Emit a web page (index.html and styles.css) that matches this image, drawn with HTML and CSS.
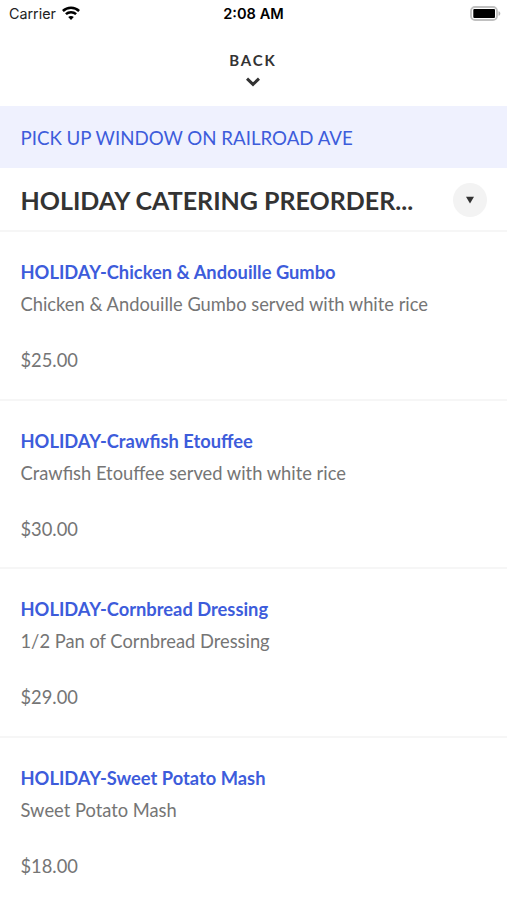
FILE: index.html
```html
<!DOCTYPE html>
<html lang="en">
<head>
  <meta charset="UTF-8">
  <meta name="viewport" content="width=device-width, initial-scale=1.0">
  <title>Menu</title>
  <link rel="stylesheet" href="styles.css">
</head>
<body>
  <div class="status">
    <div class="carrier">
      <span>Carrier</span>
      <svg class="wifi" viewBox="0 0 18 14" width="18" height="14">
        <path d="M.9 5C5.3.7 12.7.7 17.1 5M3.9 8.2c2.8-2.7 7.4-2.7 10.2 0" fill="none" stroke="#000" stroke-width="2.5"/>
        <path d="M9 14l-2.8-3c1.6-1.5 4-1.5 5.6 0z"/>
      </svg>
    </div>
    <div class="time">2:08 AM</div>
    <svg class="battery" viewBox="0 0 31 15" width="31" height="15">
      <rect x="1" y="1" width="26" height="13" rx="4" fill="none" stroke="#c0c0c0" stroke-width="1.8"/>
      <rect x="3.3" y="3" width="21.7" height="9" rx="1"/>
      <path d="M28.5 5.2c2.4.6 2.4 4 0 4.6z" fill="#b5b5b5"/>
    </svg>
  </div>

  <button class="back">
    <span>BACK</span>
    <svg viewBox="0 0 14 10" width="14" height="10">
      <path d="M1 1.6l6 5.8 6-5.8" fill="none" stroke="#333" stroke-width="3"/>
    </svg>
  </button>

  <div class="notice">PICK UP WINDOW ON RAILROAD AVE</div>

  <div class="category">
    <h1>HOLIDAY CATERING PREORDER...</h1>
    <button class="toggle">
      <svg viewBox="0 0 10 8" width="10" height="8"><path d="M1 .8h8L5 7.6z" fill="#333"/></svg>
    </button>
  </div>

  <div class="items">
    <div class="item">
      <h2>HOLIDAY-Chicken &amp; Andouille Gumbo</h2>
      <p>Chicken &amp; Andouille Gumbo served with white rice</p>
      <div class="price">$25.00</div>
    </div>
    <div class="item">
      <h2>HOLIDAY-Crawfish Etouffee</h2>
      <p>Crawfish Etouffee served with white rice</p>
      <div class="price">$30.00</div>
    </div>
    <div class="item">
      <h2>HOLIDAY-Cornbread Dressing</h2>
      <p>1/2 Pan of Cornbread Dressing</p>
      <div class="price">$29.00</div>
    </div>
    <div class="item">
      <h2>HOLIDAY-Sweet Potato Mash</h2>
      <p>Sweet Potato Mash</p>
      <div class="price">$18.00</div>
    </div>
  </div>
</body>
</html>
```

FILE: styles.css
```css
* {
  box-sizing: border-box;
}
body {
  margin: 0;
  height: 900px;
  overflow: hidden;
  background: #fff;
  color: #333;
  font-family: Lato, sans-serif;
}
button {
  border: 0;
  padding: 0;
  font-family: inherit;
  color: inherit;
}
.status {
  display: grid;
  grid-template-columns: 1fr auto 1fr;
  align-items: center;
  height: 27px;
  padding: 0 6px 0 9px;
  color: #000;
  font-family: Inter, sans-serif;
  font-size: 14.3px;
}
.carrier {
  display: flex;
  align-items: center;
  gap: 6px;
  color: #222;
}
.wifi {
  margin-bottom: 2px;
}
.time {
  margin-right: 3px;
  font-size: 14.6px;
  font-weight: 600;
}
.battery {
  justify-self: end;
  margin-bottom: 1px;
}
.back {
  display: flex;
  flex-direction: column;
  align-items: center;
  gap: 7px;
  width: 100%;
  height: 79px;
  padding: 24px 1px 0 0;
  background: #fff;
  font-size: 15px;
  font-weight: 700;
  line-height: 19px;
  letter-spacing: 1.9px;
}
.notice {
  height: 62px;
  padding: 0 20.5px;
  background: #eff1fe;
  color: #3d5cdb;
  font-size: 18.7px;
  line-height: 64px;
}
.category {
  display: flex;
  align-items: center;
  justify-content: space-between;
  height: 64px;
  padding: 2px 20px 0 20.5px;
  border-bottom: 2px solid #f6f6f6;
}
.category h1 {
  margin: 0;
  font-size: 25px;
  font-weight: 700;
}
.toggle {
  display: flex;
  align-items: center;
  justify-content: center;
  width: 34px;
  height: 34px;
  border-radius: 50%;
  background: #f3f3f3;
}
.item {
  height: 168.6px;
  padding: 24.3px 20.5px 0;
  border-bottom: 2px solid #f6f6f6;
  color: #757575;
  font-size: 18.32px;
  line-height: 32px;
}
.item h2 {
  margin: 0;
  color: #3d5cdb;
  font-size: 18.32px;
  font-weight: 700;
}
.item p {
  margin: 0 0 24px;
}
```
